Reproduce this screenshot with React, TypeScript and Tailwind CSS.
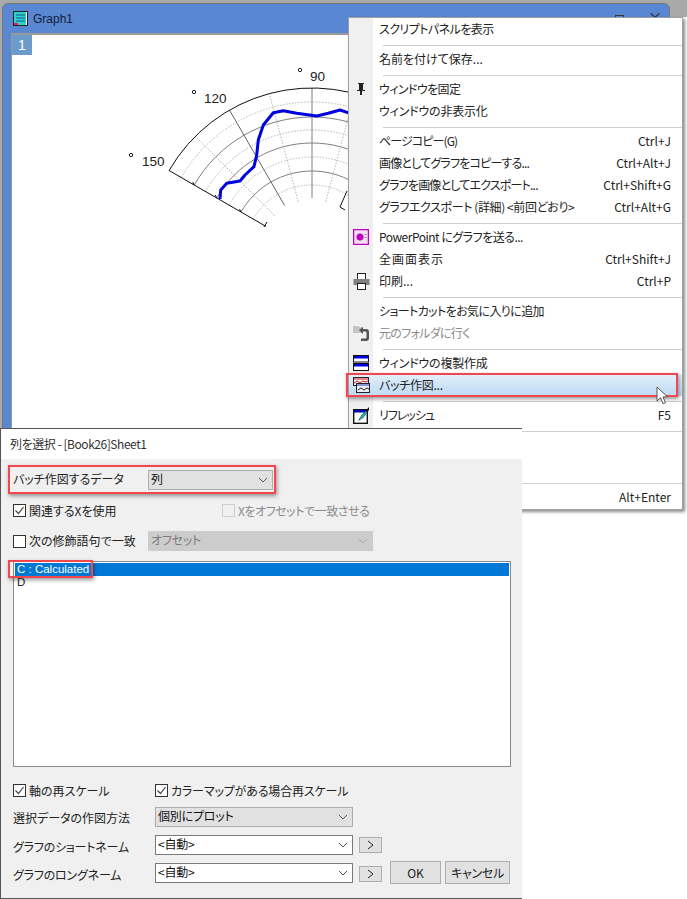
import React from "react";

const FONT = "[font-family:'Noto_Sans_CJK_JP','Noto_Sans',sans-serif] [font-feature-settings:'palt']";

const Pin = () => (
  <svg width="16" height="16" viewBox="0 0 16 16">
    <path d="M5 2h6v1h-1v6h2v1H9v4H7v-4H4V9h2V3H5z" fill="#222" />
  </svg>
);
const Ppt = () => (
  <svg width="16" height="16" viewBox="0 0 16 16">
    <rect x="0.5" y="0.5" width="15" height="15" fill="#f0e0f0" stroke="#c000c0" strokeWidth="1.5" />
    <circle cx="7" cy="8" r="3.5" fill="#c000c0" />
    <rect x="11.5" y="5" width="2" height="1" fill="#888" />
    <rect x="11.5" y="8" width="2" height="1" fill="#888" />
  </svg>
);
const Printer = () => (
  <svg width="17" height="17" viewBox="0 0 17 17">
    <rect x="4.5" y="0.5" width="8" height="6" fill="#fff" stroke="#222" />
    <rect x="0.5" y="6" width="16" height="6" fill="#808080" />
    <rect x="4.5" y="10.5" width="8" height="6" fill="#fff" stroke="#222" />
  </svg>
);
const Back = () => (
  <svg width="17" height="17" viewBox="0 0 17 17">
    <path d="M0 1h5l1 1h4v6H0z" fill="#c4c4c4" />
    <path d="M6 5l4-3v2h3a3 3 0 0 1 3 3v6a3 3 0 0 1-3 3H8v-2.500h4.500a1 1 0 0 0 1-1V7.500a1 1 0 0 0-1-1H10V9z" fill="#555" />
  </svg>
);
const Dup = () => (
  <svg width="16" height="16" viewBox="0 0 16 16">
    <rect x="0.5" y="0.500" width="15" height="6.500" fill="#fff" stroke="#111" />
    <rect x="1" y="1" width="14" height="2.500" fill="#0000e0" />
    <rect x="0.5" y="8.500" width="15" height="7" fill="#fff" stroke="#111" />
    <rect x="1" y="9" width="14" height="2.500" fill="#0000e0" />
  </svg>
);
const Batch = () => (
  <svg width="17" height="16" viewBox="0 0 17 16">
    <rect x="0.5" y="0.500" width="15" height="8" fill="#e9eef6" stroke="#222" />
    <path d="M1 2h14" stroke="#e02020" />
    <path d="M1 6l3-2 3 2 3-2 3 1 2-1" stroke="#e02020" fill="none" />
    <rect x="3.500" y="6.500" width="13" height="9" fill="#e9eef6" stroke="#222" />
    <path d="M4 8h12" stroke="#2040c0" />
    <path d="M5 13l3-2 3 2 3-2 2 1" stroke="#222" fill="none" />
  </svg>
);
const Refresh = () => (
  <svg width="17" height="17" viewBox="0 0 17 17">
    <rect x="0.700" y="2.700" width="13.600" height="13.600" fill="#fff" stroke="#111" strokeWidth="1.400" />
    <rect x="1" y="3" width="13" height="2.500" fill="#0000c0" />
    <path d="M16 0L8 9l-3 5 5-3 6-8z" fill="#111" />
    <path d="M13 4L7.500 10l-1.500 3 3-1.500 5-6z" fill="#19b8c8" />
  </svg>
);

type Row =
  | { sep: true }
  | { label: string; t?: string; key?: string; icon?: React.ReactNode; disabled?: boolean; active?: boolean };

const rows: Row[] = [
  { label: "スクリプトパネルを表示", t: "tracking-[-0.55px]" },
  { sep: true },
  { label: "名前を付けて保存..." },
  { sep: true },
  { label: "ウィンドウを固定", t: "tracking-[-0.6px]", icon: <Pin /> },
  { label: "ウィンドウの非表示化", t: "tracking-[-0.2px]" },
  { sep: true },
  { label: "ページコピー(G)", t: "tracking-[-0.9px]", key: "Ctrl+J" },
  { label: "画像としてグラフをコピーする...", t: "tracking-[-0.8px]", key: "Ctrl+Alt+J" },
  { label: "グラフを画像としてエクスポート...", t: "tracking-[-0.8px]", key: "Ctrl+Shift+G" },
  { label: "グラフエクスポート (詳細) <前回どおり>", t: "tracking-[-0.4px]", key: "Ctrl+Alt+G" },
  { sep: true },
  { label: "PowerPoint にグラフを送る...", t: "tracking-[-0.5px]", icon: <Ppt /> },
  { label: "全画面表示", t: "tracking-[1px]", key: "Ctrl+Shift+J" },
  { label: "印刷...", key: "Ctrl+P", icon: <Printer /> },
  { sep: true },
  { label: "ショートカットをお気に入りに追加", t: "tracking-[-0.6px]" },
  { label: "元のフォルダに行く", t: "tracking-[-0.7px]", disabled: true, icon: <Back /> },
  { sep: true },
  { label: "ウィンドウの複製作成", t: "tracking-[-0.2px]", icon: <Dup /> },
  { label: "バッチ作図...", t: "tracking-[-0.25px]", icon: <Batch />, active: true },
  { sep: true },
  { label: "リフレッシュ", t: "tracking-[-1px]", key: "F5", icon: <Refresh /> },
  { sep: true },
  { label: "" },
  { label: "" },
  { sep: true },
  { label: "", key: "Alt+Enter" },
];

function Menu() {
  return (
    <div className="absolute left-[348px] top-[17px] w-[335px] h-[493px] bg-white border border-[#a0a0a0] shadow-[2px_2px_3px_rgba(0,0,0,0.45)]">
      <div className="absolute left-0 top-0 bottom-0 w-[24px] bg-[#f0f0f0]" />
      <div className="relative flex flex-col">
        {rows.map((r, i) =>
          "sep" in r ? (
            <div key={i} className="h-[8px] pt-[5px] pl-[34px]">
              <div className="h-px bg-[#d0d0d0]" />
            </div>
          ) : (
            <div
              key={i}
              className={
                "h-[22px] flex items-center text-[12px] " +
                (r.active
                  ? "bg-gradient-to-b from-[#e4f0fb] to-[#bcd9f3] text-[#222]"
                  : r.disabled
                  ? "text-[#8a8a8a]"
                  : "text-[#222]")
              }
            >
              <div className="w-[24px] mr-[6px] shrink-0 flex justify-center items-center">{r.icon}</div>
              <span className={"whitespace-pre " + (r.t ?? "")}>{r.label}</span>
              {r.key && <span className="ml-auto pr-[11px]">{r.key}</span>}
            </div>
          )
        )}
      </div>
    </div>
  );
}

function polar(r: number, deg: number) {
  const a = (deg * Math.PI) / 180;
  return [312 + r * Math.cos(a), 253 - r * Math.sin(a)];
}
function arcPath(r: number, from: number, to: number) {
  const [x1, y1] = polar(r, from);
  const [x2, y2] = polar(r, to);
  return `M${x1} ${y1}A${r} ${r} 0 0 1 ${x2} ${y2}`;
}
function spoke(r1: number, r2: number, d: number) {
  const [x1, y1] = polar(r1, d);
  const [x2, y2] = polar(r2, d);
  return `M${x1} ${y1}L${x2} ${y2}`;
}

function Chart() {
  const curve =
    "M220 199L220.700 190L226.700 183.300L240 181L245 175L254 166.700L256.700 155L258.300 140L263.300 125L273.300 112.700L283.300 110.700L296.700 113.300L316.700 116L328.300 113.300L340 110L350 113.300";
  return (
    <svg className="absolute left-0 top-0" width="360" height="240" viewBox="0 0 360 240">
      {[68, 96, 123, 151].map((r) => (
        <path key={r} d={arcPath(r, 150, 30)} fill="none" stroke="#b5b5b5" strokeDasharray="1.500 1.500" />
      ))}
      {[82, 110, 136].map((r) => (
        <path key={r} d={arcPath(r, 150, 30)} fill="none" stroke="#808080" />
      ))}
      {[105, 135, 75].map((d) => (
        <path key={d} d={spoke(53, 165, d)} fill="none" stroke="#b5b5b5" strokeDasharray="1.500 1.500" />
      ))}
      <path d={spoke(55, 165, 120)} stroke="#666" fill="none" />
      <path d={spoke(55, 165, 90)} stroke="#808080" fill="none" />
      <path d={arcPath(165, 150, 60)} fill="none" stroke="#111" />
      <path d={spoke(53, 165, 150)} fill="none" stroke="#111" />
      {[82, 110, 136].map((r) => {
        const [x, y] = polar(r, 150);
        return <path key={r} d={`M${x} ${y}l-1.500 -3`} stroke="#111" />;
      })}
      <path d="M264 227l3 -5" stroke="#111" fill="none" />
      <path d="M345 210L340 207L347 191" stroke="#111" fill="none" />
      <path d={curve} fill="none" stroke="#0000e0" strokeWidth="3" strokeLinejoin="round" />
      {[
        [131, 155],
        [194, 92],
        [300, 70],
      ].map(([x, y]) => (
        <circle key={x} cx={x} cy={y} r="1.700" fill="none" stroke="#222" />
      ))}
      <g className="[font-family:'Liberation_Sans',sans-serif] text-[13.500px]" fill="#222">
        <text x="142" y="166">150</text>
        <text x="204" y="103">120</text>
        <text x="310" y="81">90</text>
      </g>
    </svg>
  );
}

function GraphWindow() {
  return (
    <div className="absolute left-[2px] top-[3px] w-[668px] h-[440px] bg-[#5a87d2] rounded-t-[6px] border border-[#777] flex flex-col overflow-hidden">
      <div className="h-[29px] shrink-0 flex items-center pl-[10px] gap-[5px]">
        <svg width="15" height="15" viewBox="0 0 15 15">
          <rect x="0.500" y="0.500" width="14" height="14" fill="#2fd0c8" stroke="#222" />
          <rect x="13" y="1" width="1" height="13" fill="#fff" />
          <path d="M3 4h9M3 7h9M3 10h9" stroke="#0a5a8a" />
          <rect x="1" y="12" width="4" height="2" fill="#e02060" />
        </svg>
        <span className="text-[12px] text-[#10203a] [font-family:'Liberation_Sans',sans-serif]">Graph1</span>
      </div>
      <div className="ml-[8px] flex-1 bg-white border-t-2 border-l border-[#9a9a9a] relative">
        <div className="w-[20px] h-[20px] bg-[#6b9bc8] text-white text-[14px] flex items-center justify-center [font-family:'Liberation_Sans',sans-serif]">
          1
        </div>
      </div>
    </div>
  );
}

const Chevron = ({ color = "#555" }: { color?: string }) => (
  <svg width="10" height="6" viewBox="0 0 10 6" className="ml-auto mr-[4px] shrink-0">
    <path d="M1 1l4 4 4-4" fill="none" stroke={color} />
  </svg>
);

function Select({
  text,
  w,
  kind = "gray",
}: {
  text: string;
  w: string;
  kind?: "gray" | "white" | "disabled";
}) {
  const cls =
    kind === "white"
      ? "bg-white border-[#7a7a7a] text-[#111]"
      : kind === "disabled"
      ? "bg-[#cccccc] border-[#cccccc] text-[#7c7c7c]"
      : "bg-[#e1e1e1] border-[#adadad] text-[#111]";
  return (
    <div className={`${w} h-[20px] shrink-0 border flex items-center pl-[2px] text-[12px] ${cls}`}>
      <span className="-mt-[2px] tracking-[-0.2px]">{text}</span>
      <Chevron color={kind === "disabled" ? "#a8a8a8" : "#555"} />
    </div>
  );
}

const Check = ({ on = true, disabled = false }: { on?: boolean; disabled?: boolean }) => (
  <div
    className={
      "w-[13px] h-[13px] shrink-0 border flex items-center justify-center " +
      (disabled ? "border-[#cfcfcf] bg-[#f0f0f0]" : "border-[#333] bg-white")
    }
  >
    {on && (
      <svg width="11" height="11" viewBox="0 0 11 11">
        <path d="M1.500 5.500l3 3 5-6.500" fill="none" stroke="#444" strokeWidth="1.200" />
      </svg>
    )}
  </div>
);

const Arrow = () => (
  <div className="w-[23px] h-[16px] mt-[2px] ml-[6px] shrink-0 bg-[#e1e1e1] border border-[#adadad] flex items-center justify-center">
    <svg width="8" height="10" viewBox="0 0 8 10">
      <path d="M1 1l5 4-5 4" fill="none" stroke="#222" />
    </svg>
  </div>
);

function Dialog() {
  return (
    <div className="absolute left-0 top-[428px] w-[522px] h-[471px] bg-[#f0f0f0] border-t border-l border-b border-[#555] flex flex-col text-[12px] text-[#222]">
      <div className="h-[30px] shrink-0 bg-white flex items-center pl-[9px] text-[#333] tracking-[-0.45px]">列を選択 - [Book26]Sheet1</div>
      <div className="flex flex-col pl-[12px] pt-[11px]">
        <div className="flex items-center h-[20px]">
          <span className="w-[135px] shrink-0 -mt-[2px]">バッチ作図するデータ</span>
          <Select text="列" w="w-[125px]" />
        </div>
        <div className="flex items-center h-[13px] mt-[14px]">
          <Check />
          <span className="ml-[3px] w-[193px]">関連するXを使用</span>
          <Check on={false} disabled />
          <span className="ml-[3px] text-[#8a8a8a] tracking-[-0.45px]">Xをオフセットで一致させる</span>
        </div>
        <div className="flex items-center h-[20px] mt-[14px]">
          <Check on={false} />
          <span className="ml-[3px] w-[119px]">次の修飾語句で一致</span>
          <Select text="オフセット" w="w-[225px]" kind="disabled" />
        </div>
        <div className="w-[498px] h-[206px] mt-[10px] bg-white border border-[#8a8a8a] p-[1px] text-[11.500px] leading-[13px] [font-family:'Liberation_Sans',sans-serif]">
          <div className="h-[13px] bg-[#0078d7] text-white pl-[2px]">C : Calculated</div>
          <div className="h-[13px] pl-[2px]">D</div>
        </div>
        <div className="flex items-center h-[13px] mt-[17px]">
          <Check />
          <span className="ml-[3px] w-[126px]">軸の再スケール</span>
          <Check />
          <span className="ml-[3px] tracking-[-0.15px]">カラーマップがある場合再スケール</span>
        </div>
        <div className="flex items-center h-[20px] mt-[10px]">
          <span className="w-[142px] shrink-0 pt-[2px]">選択データの作図方法</span>
          <Select text="個別にプロット" w="w-[198px]" />
        </div>
        <div className="flex items-start h-[20px] mt-[8px]">
          <span className="w-[142px] shrink-0 pt-[3px] tracking-[-0.2px]">グラフのショートネーム</span>
          <Select text="<自動>" w="w-[198px]" kind="white" />
          <Arrow />
        </div>
        <div className="flex items-start h-[23px] mt-[6px]">
          <span className="w-[142px] shrink-0 pt-[5px] tracking-[-0.2px]">グラフのロングネーム</span>
          <div className="mt-[2px]">
            <Select text="<自動>" w="w-[198px]" kind="white" />
          </div>
          <div className="mt-[3px]">
            <Arrow />
          </div>
          <div className="ml-[8px] w-[51px] h-[23px] bg-[#e1e1e1] border border-[#adadad] flex items-center justify-center">OK</div>
          <div className="ml-[4px] w-[65px] h-[23px] bg-[#e1e1e1] border border-[#adadad] flex items-center justify-center tracking-[-0.3px]">キャンセル</div>
        </div>
      </div>
    </div>
  );
}

const Red = ({ cls }: { cls: string }) => (
  <div className={`absolute border-2 border-[#f2474f] shadow-[1px_2px_4px_rgba(0,0,0,0.4)] pointer-events-none ${cls}`} />
);

export default function App() {
  return (
    <div className={`relative w-[687px] h-[899px] overflow-hidden bg-white ${FONT}`}>
      <div className="absolute left-0 top-0 w-full h-[17px] bg-[#a9a9a9]" />
      <div className="absolute left-0 top-0 w-[2px] h-[440px] bg-[#a9a9a9]" />
      <GraphWindow />
      <Chart />
      <div className="absolute left-[615px] top-[15px] w-[9px] h-[3px] border border-[#333]" />
      <div className="absolute left-[648px] top-[11px] text-[14px] leading-[10px] text-[#222]">×</div>
      <Menu />
      <Red cls="left-[346px] top-[373px] w-[332px] h-[24px]" />
      <svg className="absolute left-[656px] top-[386px]" width="12" height="19" viewBox="0 0 12 19">
        <path d="M1 1v14l3.500-3.300 2.500 6 2.500-1-2.500-5.800h4.500z" fill="#fff" stroke="#555" />
      </svg>
      <Dialog />
      <Red cls="left-[8px] top-[465px] w-[268px] h-[29px]" />
      <Red cls="left-[8px] top-[560px] w-[85px] h-[18px]" />
    </div>
  );
}
